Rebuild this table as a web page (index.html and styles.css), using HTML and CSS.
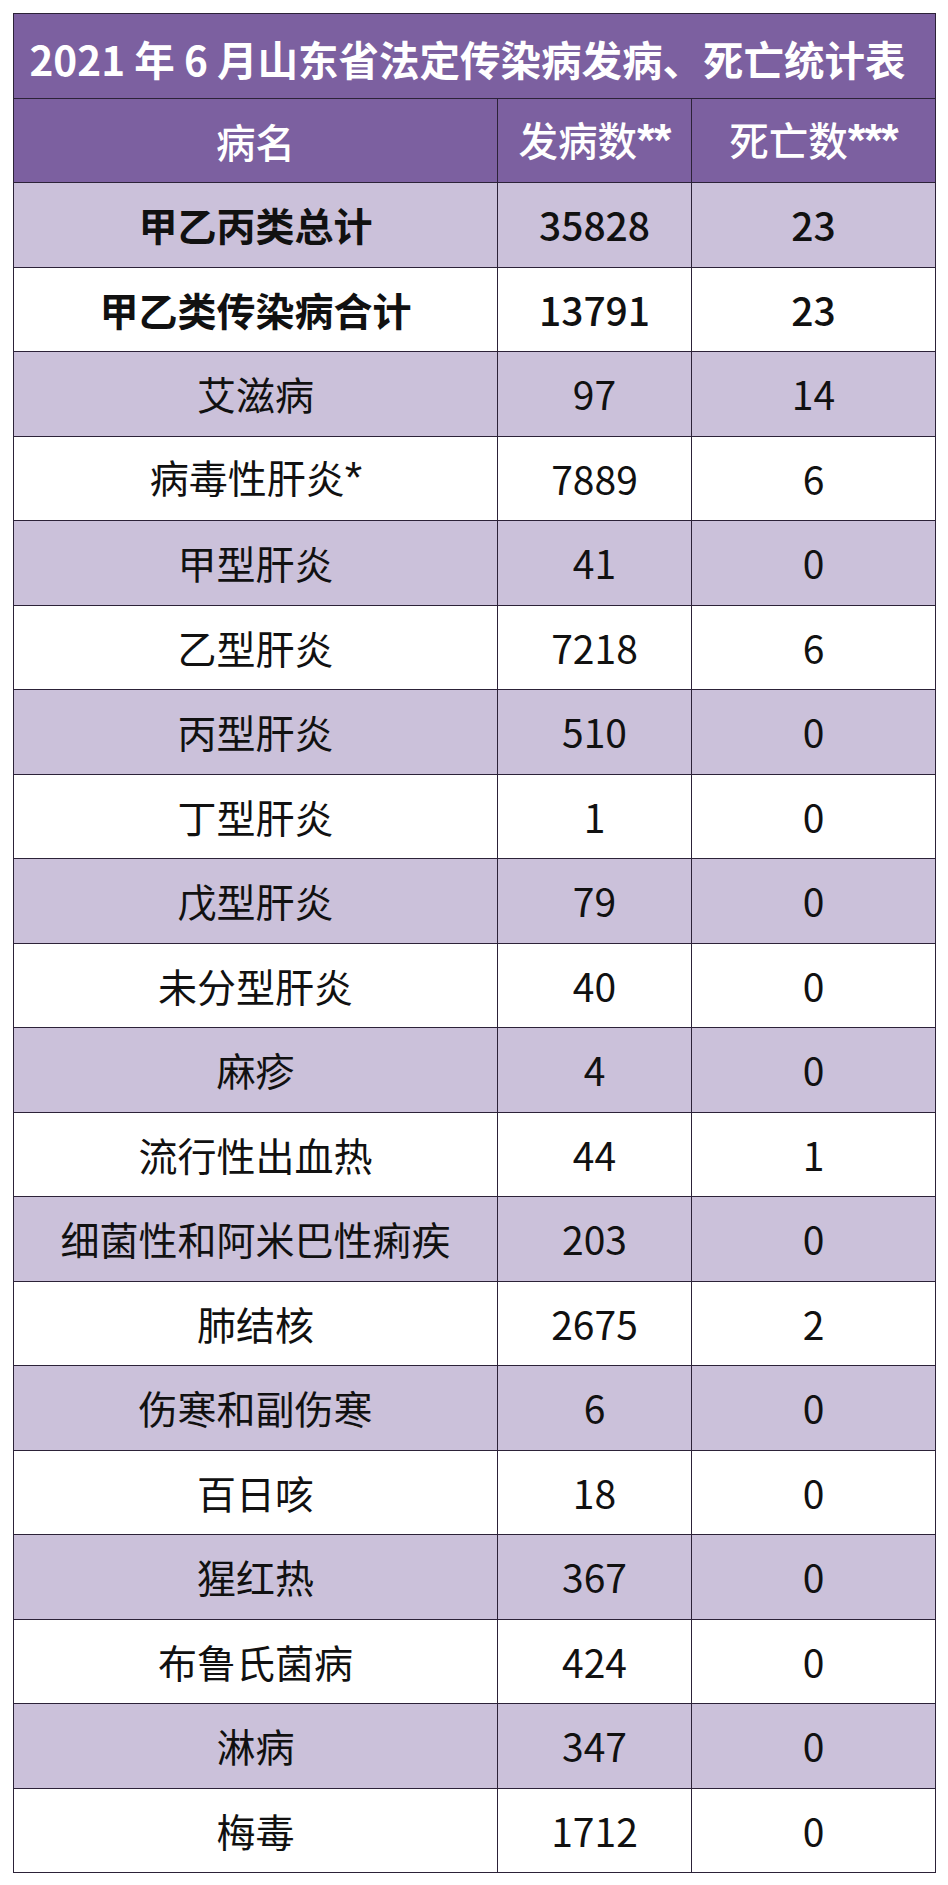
FILE: index.html
```html
<!DOCTYPE html>
<html lang="zh-CN">
<head>
<meta charset="utf-8">
<title>2021年6月山东省法定传染病发病、死亡统计表</title>
<link rel="stylesheet" href="styles.css">
</head>
<body>
<table class="stats">
  <colgroup>
    <col class="c-name"><col class="c-cases"><col class="c-deaths">
  </colgroup>
  <thead>
    <tr class="title-row"><th colspan="3">2021 年 6 月山东省法定传染病发病、死亡统计表</th></tr>
    <tr class="head-row"><th>病名</th><th>发病数<span class="ast">**</span></th><th>死亡数<span class="ast">***</span></th></tr>
  </thead>
  <tbody>
    <tr class="alt total"><td>甲乙丙类总计</td><td>35828</td><td>23</td></tr>
    <tr class="total"><td>甲乙类传染病合计</td><td>13791</td><td>23</td></tr>
    <tr class="alt"><td>艾滋病</td><td>97</td><td>14</td></tr>
    <tr><td>病毒性肝炎<span class="ast">*</span></td><td>7889</td><td>6</td></tr>
    <tr class="alt"><td>甲型肝炎</td><td>41</td><td>0</td></tr>
    <tr><td>乙型肝炎</td><td>7218</td><td>6</td></tr>
    <tr class="alt"><td>丙型肝炎</td><td>510</td><td>0</td></tr>
    <tr><td>丁型肝炎</td><td>1</td><td>0</td></tr>
    <tr class="alt"><td>戊型肝炎</td><td>79</td><td>0</td></tr>
    <tr><td>未分型肝炎</td><td>40</td><td>0</td></tr>
    <tr class="alt"><td>麻疹</td><td>4</td><td>0</td></tr>
    <tr><td>流行性出血热</td><td>44</td><td>1</td></tr>
    <tr class="alt"><td>细菌性和阿米巴性痢疾</td><td>203</td><td>0</td></tr>
    <tr><td>肺结核</td><td>2675</td><td>2</td></tr>
    <tr class="alt"><td>伤寒和副伤寒</td><td>6</td><td>0</td></tr>
    <tr><td>百日咳</td><td>18</td><td>0</td></tr>
    <tr class="alt"><td>猩红热</td><td>367</td><td>0</td></tr>
    <tr><td>布鲁氏菌病</td><td>424</td><td>0</td></tr>
    <tr class="alt"><td>淋病</td><td>347</td><td>0</td></tr>
    <tr><td>梅毒</td><td>1712</td><td>0</td></tr>
  </tbody>
</table>
</body>
</html>
```

FILE: styles.css
```css
html, body {
  margin: 0;
  padding: 0;
  background: #ffffff;
}

body {
  padding: 13px 0 0 13px;
  font-family: "Noto Sans CJK SC", "Noto Sans", sans-serif;
  color: #111111;
}

.stats {
  border-collapse: collapse;
  table-layout: fixed;
  width: 922px;
  border: 1.5px solid #2c2238;
}

.c-name { width: 484px; }
.c-cases { width: 194px; }
.c-deaths { width: 244px; }

.stats tr {
  height: 84.5px;
}

.stats th,
.stats td {
  border: 1.5px solid #2c2238;
  padding: 0;
  text-align: center;
  vertical-align: middle;
  white-space: nowrap;
  line-height: 1;
}

.title-row th {
  background: #7c60a0;
  color: #ffffff;
  font-size: 40.5px;
  font-weight: 700;
  padding-top: 6px;
  padding-right: 14px;
}

.head-row th {
  background: #7c60a0;
  color: #ffffff;
  font-size: 39.5px;
  font-weight: 500;
}

.stats td {
  font-size: 39px;
  font-weight: 400;
  background: #ffffff;
}

.stats tr.alt td {
  background: #cbc1da;
}

.stats tr.total td {
  font-weight: 500;
}

.stats tr.total td:first-child {
  font-weight: 700;
}

.ast {
  font-family: "Liberation Sans", "DejaVu Sans", sans-serif;
  font-size: 1.15em;
  letter-spacing: -1px;
}

.head-row .ast {
  font-weight: 700;
}
```
